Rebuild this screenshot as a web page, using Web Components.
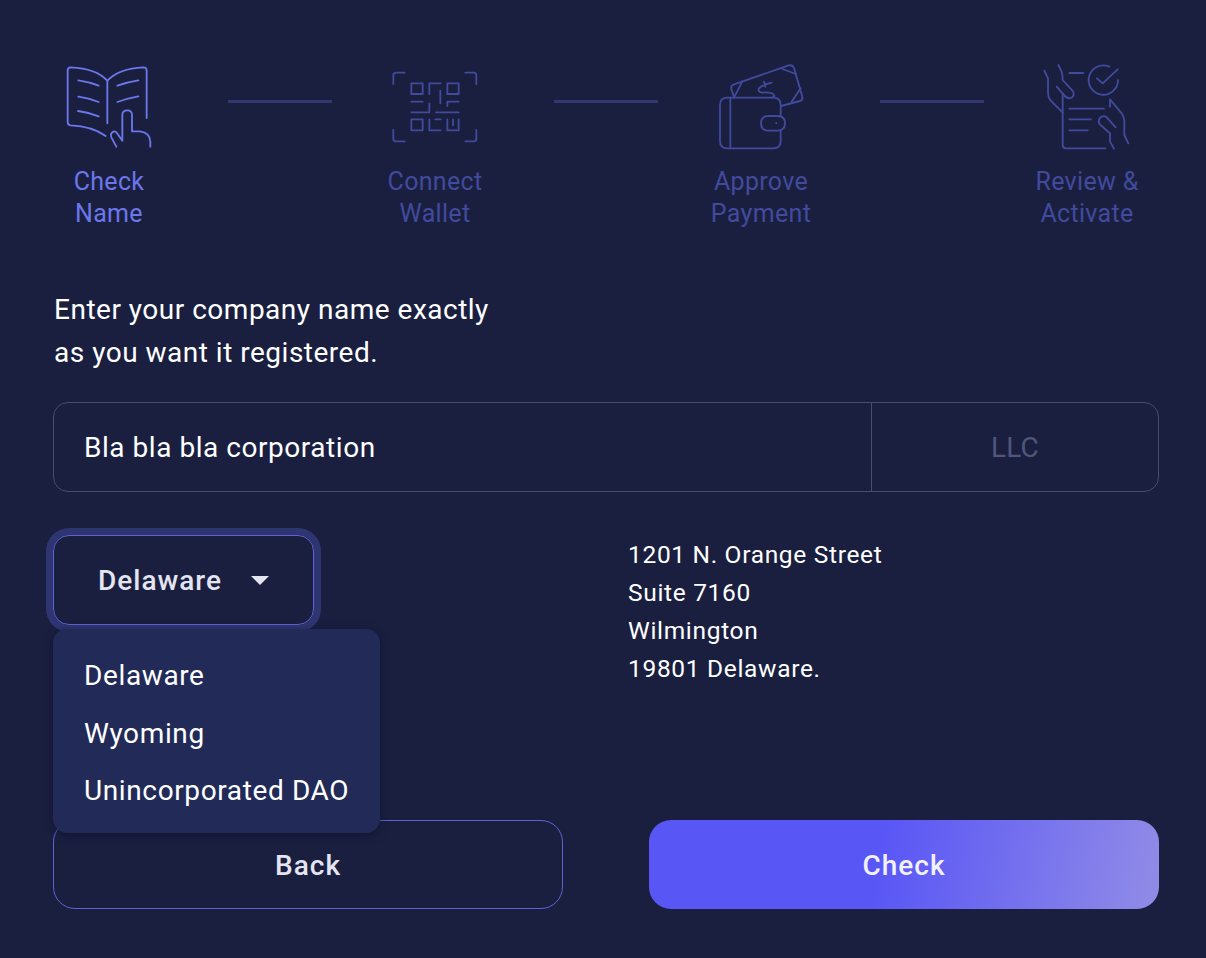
<!DOCTYPE html>
<html lang="en">
<head>
<meta charset="utf-8">
<title>Check name</title>
<style>
    html, body { margin: 0; background: #1a1f40; }
    body { font-family: Roboto, "Liberation Sans", sans-serif; color: #fff; }
</style>
</head>
<body>
<company-wizard></company-wizard>

<script>
class WizardStep extends HTMLElement {
    constructor() {
        super()
        this.attachShadow({mode: 'open'}).innerHTML = `
            <style>
                :host {
                    display: flex;
                    flex-direction: column;
                    align-items: center;
                    width: 112px;
                    color: #414a9c;
                }
                :host([active]) { color: #6b77ea; }
                .icon { height: 96px; margin-bottom: 10px; }
                .label {
                    font-size: 25px;
                    line-height: 32px;
                    text-align: center;
                    white-space: nowrap;
                    letter-spacing: 0.32px;
                }
            </style>
            <div class="icon"><slot name="icon"></slot></div>
            <div class="label"><slot></slot></div>
        `
    }
}

class WizardLine extends HTMLElement {
    constructor() {
        super()
        this.attachShadow({mode: 'open'}).innerHTML = `
            <style>
                :host {
                    display: block;
                    width: 104px;
                    height: 3px;
                    margin: 40px 47px 0 63px;
                    background: #313770;
                }
            </style>
        `
    }
}

class NameField extends HTMLElement {
    constructor() {
        super()
        this.attachShadow({mode: 'open'}).innerHTML = `
            <style>
                :host {
                    display: flex;
                    box-sizing: border-box;
                    height: 90px;
                    border: 1px solid #484c6c;
                    border-radius: 15px;
                    font-size: 28px;
                }
                .name {
                    flex: 1;
                    display: flex;
                    align-items: center;
                    padding-left: 30px;
                    letter-spacing: 0.54px;
                    border-right: 1px solid #484c6c;
                }
                .suffix {
                    width: 286px;
                    display: flex;
                    align-items: center;
                    justify-content: center;
                    color: #50557a;
                    letter-spacing: 0.1px;
                }
            </style>
            <div class="name"><slot></slot></div>
            <div class="suffix"><slot name="suffix"></slot></div>
        `
    }
}

class StateSelect extends HTMLElement {
    constructor() {
        super()
        this.attachShadow({mode: 'open'}).innerHTML = `
            <style>
                :host {
                    display: block;
                    position: relative;
                    width: 261px;
                    height: 90px;
                }
                .toggle {
                    box-sizing: border-box;
                    height: 90px;
                    padding-top: 1px;
                    display: flex;
                    align-items: center;
                    justify-content: center;
                    gap: 29px;
                    border: 1px solid #5c63d6;
                    border-radius: 16px;
                    box-shadow: 0 0 0 7px #2f3570;
                    color: #e4e5f0;
                    font-size: 28px;
                    font-weight: 500;
                    letter-spacing: 1px;
                }
                .caret {
                    width: 0;
                    height: 0;
                    border-left: 9px solid transparent;
                    border-right: 9px solid transparent;
                    border-top: 9px solid #e4e5f0;
                }
                .menu {
                    position: absolute;
                    left: 0;
                    top: 94px;
                    width: 327px;
                    height: 204px;
                    box-sizing: border-box;
                    padding: 18px 0 0 31px;
                    background: #222b58;
                    border-radius: 14px;
                    box-shadow: 0 2px 8px rgba(10, 12, 35, 0.5);
                    font-size: 28px;
                    line-height: 57.5px;
                    letter-spacing: 0.62px;
                    white-space: nowrap;
                }
            </style>
            <div class="toggle"><span>Delaware</span><span class="caret"></span></div>
            <div class="menu"><slot></slot></div>
        `
    }
}

class StateOption extends HTMLElement {
    constructor() {
        super()
        this.attachShadow({mode: 'open'}).innerHTML = `
            <style>:host { display: block; }</style>
            <slot></slot>
        `
    }
}

class OfficeAddress extends HTMLElement {
    constructor() {
        super()
        this.attachShadow({mode: 'open'}).innerHTML = `
            <style>
                :host {
                    display: block;
                    padding-top: 1px;
                    font-size: 24.5px;
                    line-height: 38px;
                    letter-spacing: 0.68px;
                }
            </style>
            <slot></slot>
        `
    }
}

class WizardButton extends HTMLElement {
    constructor() {
        super()
        this.attachShadow({mode: 'open'}).innerHTML = `
            <style>
                :host {
                    display: flex;
                    align-items: center;
                    justify-content: center;
                    box-sizing: border-box;
                    width: 510px;
                    height: 89px;
                    padding-top: 1px;
                    border: 1px solid #5c63d6;
                    border-radius: 22px;
                    color: #e4e5f0;
                    font-size: 28px;
                    font-weight: 500;
                    letter-spacing: 1px;
                }
                :host([primary]) {
                    border: 0;
                    color: #f1f1ff;
                    background: linear-gradient(100deg, #5956f6 45%, #918ce6 100%);
                }
            </style>
            <slot></slot>
        `
    }
}

class CompanyWizard extends HTMLElement {
    constructor() {
        super()
        this.attachShadow({mode: 'open'}).innerHTML = `
            <style>
                :host {
                    display: flex;
                    flex-direction: column;
                    box-sizing: border-box;
                    width: 1206px;
                    height: 958px;
                    padding: 60px 47px 0 53px;
                }
                .steps { display: flex; align-items: flex-start; height: 228px; }
                svg {
                    display: block;
                    width: 112px;
                    height: 96px;
                    fill: none;
                    stroke: currentColor;
                    stroke-width: 5.5;
                    stroke-linecap: round;
                    stroke-linejoin: round;
                }
                p {
                    margin: 0 0 28px 1px;
                    font-size: 28px;
                    line-height: 43px;
                    letter-spacing: 0.5px;
                }
                .details { display: flex; margin-top: 43px; height: 285px; }
                office-address { margin: 0 0 0 314px; }
                .actions { display: flex; justify-content: space-between; }
            </style>
            <div class="steps">
                <wizard-step active>
                    <svg slot="icon" viewBox="9 30 336 288">
                        <path d="M167 258C140 238 110 228 62 226Q53 225 53 216V62Q53 52 62 52C110 54 150 68 172 92C195 68 235 54 280 52Q290 52 290 62V204"/>
                        <path d="M172 92V220"/>
                        <path d="M85 91Q115 95 146 107M85 140Q115 144 146 156M84 183Q115 187 146 199"/>
                        <path d="M202 107Q232 96 265 91M202 156Q232 145 265 139"/>
                        <path d="M199 290L184 262Q180 250 190 245Q197 242 203 252L217 272V195Q217 181 232 181Q246 181 246 195V244H270Q300 248 301 275V290"/>
                    </svg>
                    Check<br>Name
                </wizard-step>
                <wizard-line></wizard-line>
                <wizard-step>
                    <svg slot="icon" viewBox="27 30 336 288">
                        <path d="M70 102V76Q70 68 78 68H104M286 68H311Q319 68 319 76V102M70 240V266Q70 274 78 274H104M286 274H311Q319 274 319 266V240"/>
                        <path d="M124 100H158V132H124ZM232 100H266V132H232ZM124 208H158V241H124Z"/>
                        <path d="M232 208V241H266V208M249 208V226"/>
                        <path d="M178 132V100H212M211 122V160M124 155H158M232 168V155H266M124 187H178V160M198 187H266M178 208V241H212M196 208H212"/>
                    </svg>
                    Connect<br>Wallet
                </wizard-step>
                <wizard-line></wizard-line>
                <wizard-step>
                    <svg slot="icon" viewBox="45 30 336 288">
                        <path d="M272 198V165Q272 143 250 143H112Q90 143 90 165V273Q90 295 112 295H250Q272 295 272 273V242"/>
                        <path d="M121 143V295"/>
                        <path d="M235 198H263Q285 198 285 220Q285 242 263 242H235Q213 242 213 220Q213 198 235 198Z"/>
                        <path d="M259 219v.5"/>
                        <path d="M133 143L124 118Q122 106 132 103L296 46Q308 44 312 54L337 140Q339 150 330 153L273 168"/>
                        <path d="M132 143L157 94M277 57L318 72M305 155L332 115"/>
                        <path d="M222 95L226 110M245 98Q215 105 207 115Q202 125 215 128Q245 125 252 135Q256 140 245 143"/>
                    </svg>
                    Approve<br>Payment
                </wizard-step>
                <wizard-line></wizard-line>
                <wizard-step>
                    <svg slot="icon" viewBox="33 30 336 288">
                        <path d="M148 69H190"/>
                        <path d="M268 50A44 44 0 1 0 294 90"/>
                        <path d="M231 85L248 100L293 58"/>
                        <path d="M128 130V285Q128 295 138 295H256"/>
                        <path d="M148 176H252M148 208H213M148 241H203"/>
                        <path d="M73 62L84 85V125Q84 145 95 155L128 187"/>
                        <path d="M115 45L125 65Q128 78 128 90L160 125Q165 140 150 145Q140 146 130 133L110 110"/>
                        <path d="M270 148V170M270 148L305 190Q315 205 313 225V255L325 280"/>
                        <path d="M287 232L258 200Q245 195 238 207Q232 218 245 228L270 250V275L282 296"/>
                    </svg>
                    Review &amp;<br>Activate
                </wizard-step>
            </div>
            <p>Enter your company name exactly<br>as you want it registered.</p>
            <name-field>Bla bla bla corporation<span slot="suffix">LLC</span></name-field>
            <div class="details">
                <state-select>
                    <state-option>Delaware</state-option>
                    <state-option>Wyoming</state-option>
                    <state-option>Unincorporated DAO</state-option>
                </state-select>
                <office-address>1201 N. Orange Street<br>Suite 7160<br>Wilmington<br>19801 Delaware.</office-address>
            </div>
            <div class="actions">
                <wizard-button>Back</wizard-button>
                <wizard-button primary>Check</wizard-button>
            </div>
        `
    }
}

customElements.define('wizard-step', WizardStep)
customElements.define('wizard-line', WizardLine)
customElements.define('name-field', NameField)
customElements.define('state-option', StateOption)
customElements.define('state-select', StateSelect)
customElements.define('office-address', OfficeAddress)
customElements.define('wizard-button', WizardButton)
customElements.define('company-wizard', CompanyWizard)
</script>
</body>
</html>
